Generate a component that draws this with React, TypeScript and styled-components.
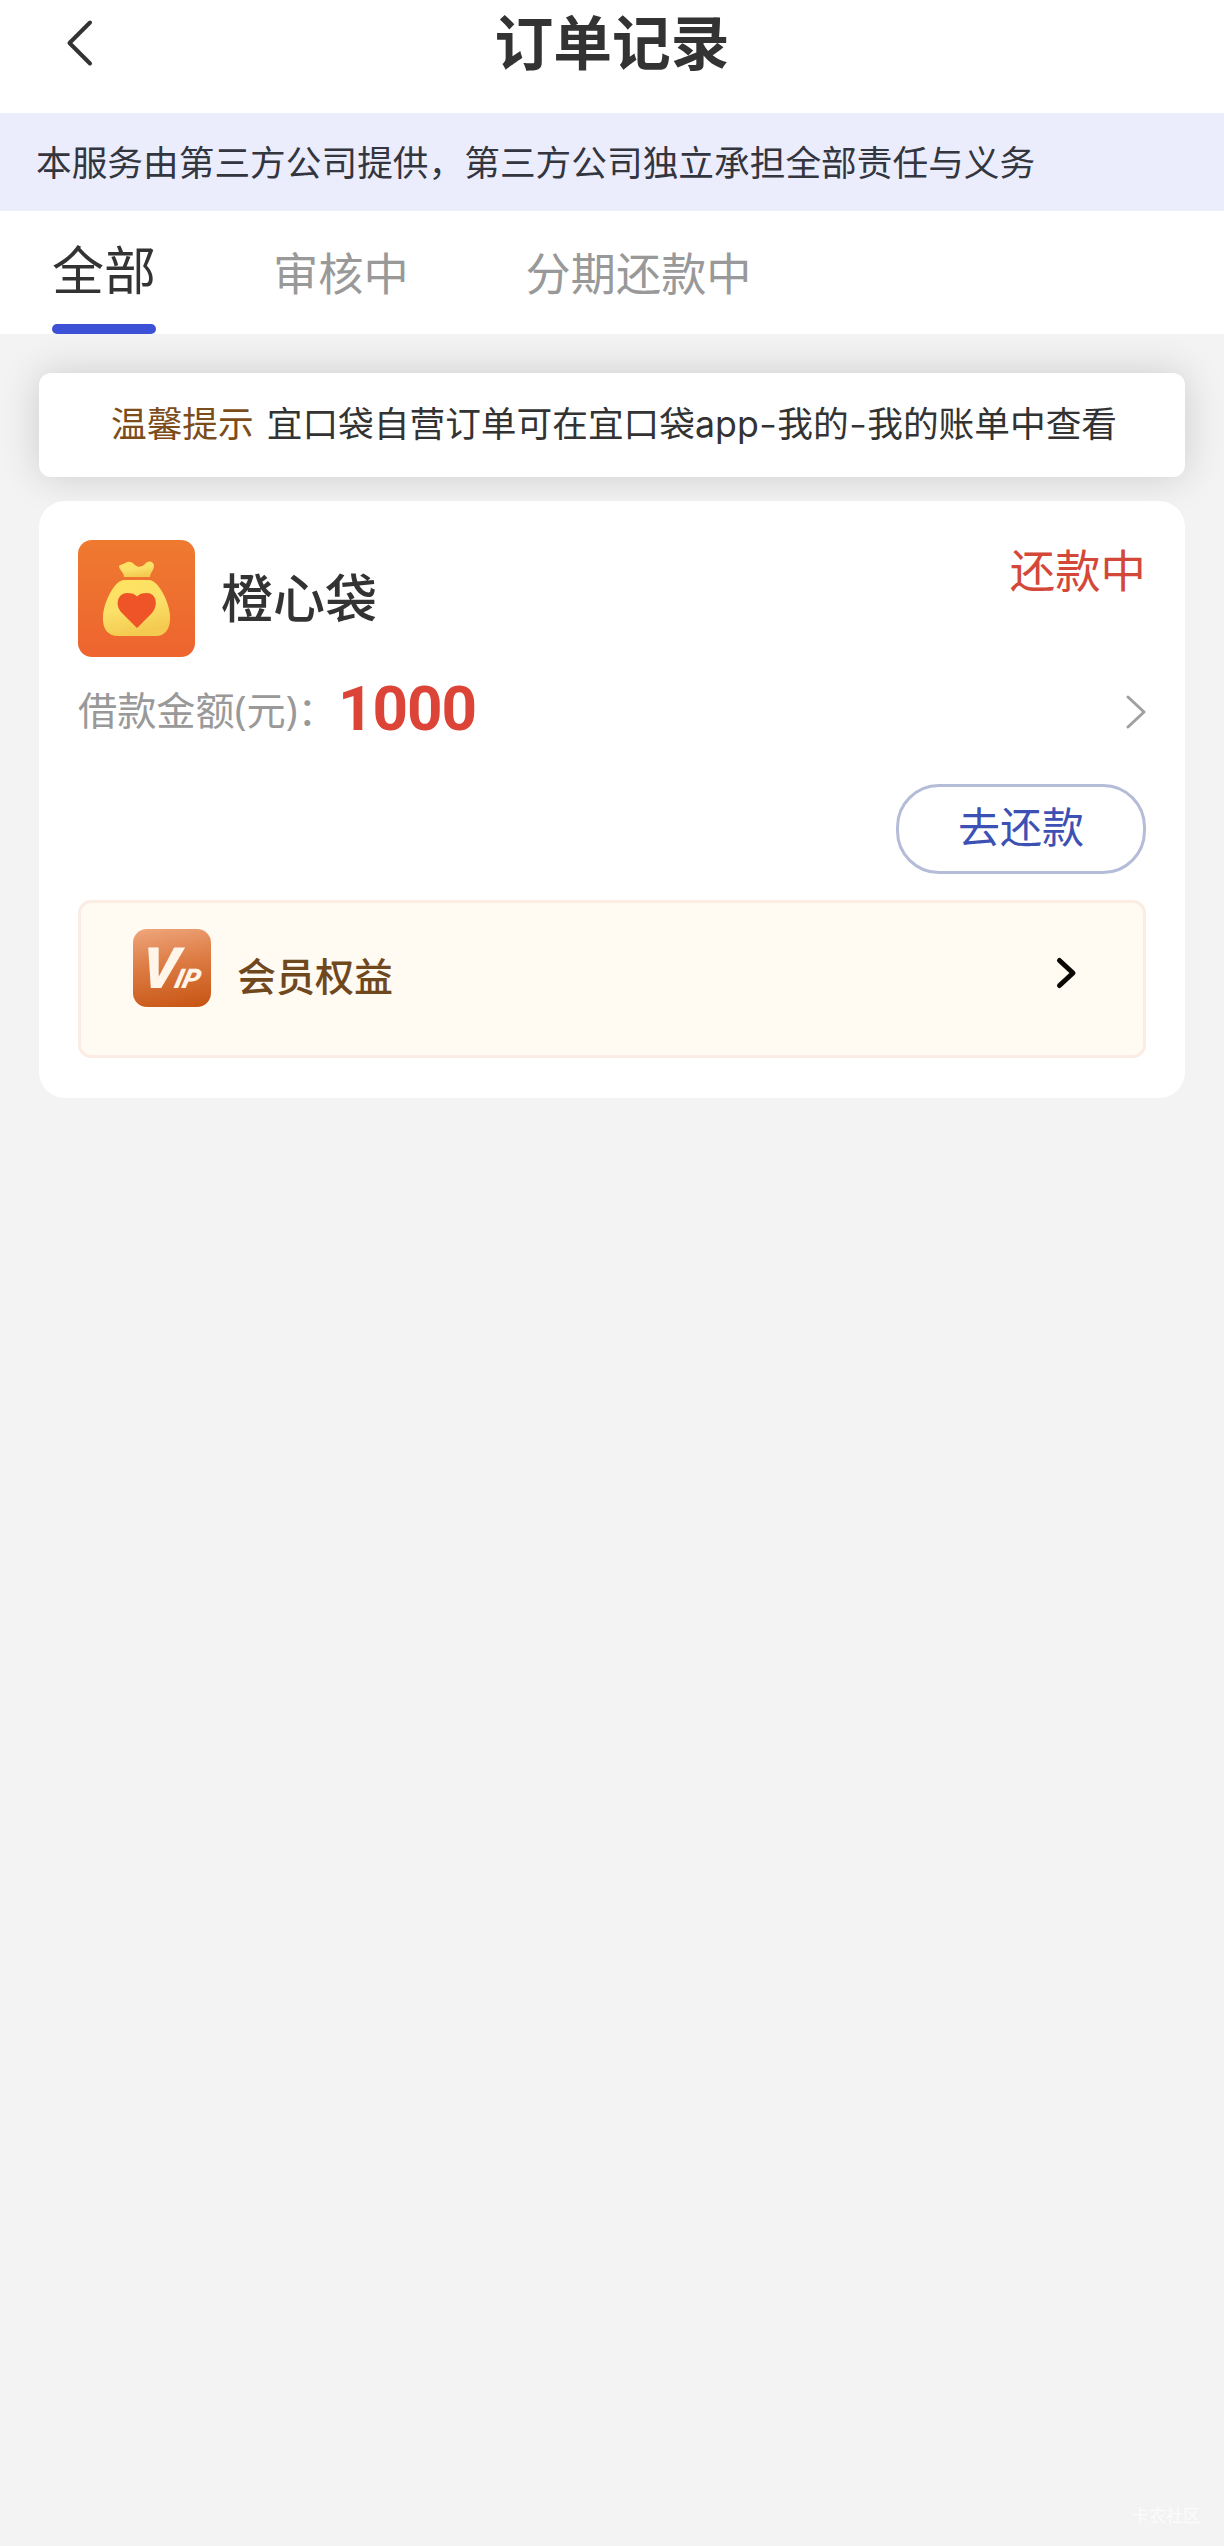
import React from "react";
import styled, { createGlobalStyle } from "styled-components";

const cjk = `"Noto Sans CJK SC", sans-serif`;
const mixed = `Inter, "Noto Sans CJK SC", sans-serif`;

const GlobalStyle = createGlobalStyle`
  * { box-sizing: border-box; }
  body { margin: 0; background: #f3f3f3; font-family: ${cjk}; color: #333; }
`;

const Page = styled.div`
  display: flex;
  flex-direction: column;
  width: 1224px;
  height: 2546px;
  background: #f3f3f3;
  overflow: hidden;
`;

const Header = styled.header`
  display: grid;
  grid-template-columns: 160px 1fr 160px;
  height: 113px;
  flex: none;
  background: #fff;
`;

const BackButton = styled.button`
  display: flex;
  align-items: flex-start;
  padding: 19px 0 0 65px;
  border: 0;
  background: none;
`;

const Title = styled.h1`
  margin: 0;
  text-align: center;
  font-family: Roboto, ${cjk};
  font-size: 58.8px;
  font-weight: 700;
  line-height: 90px;
`;

const Notice = styled.div`
  flex: none;
  height: 98px;
  padding-left: 36px;
  background: #ebedfc;
  color: #33353f;
  font-size: 35.7px;
  line-height: 95px;
  white-space: nowrap;
`;

const Tabs = styled.nav`
  display: flex;
  gap: 117px;
  flex: none;
  height: 123px;
  padding-left: 52px;
  background: #fff;
`;

const Tab = styled.div<{ $active?: boolean }>`
  display: flex;
  flex-direction: column;
  justify-content: space-between;
  height: 123px;
  white-space: nowrap;
  color: ${(p) => (p.$active ? "#333" : "#999")};
  font-size: ${(p) => (p.$active ? 52 : 45.2)}px;
  line-height: ${(p) => (p.$active ? 114 : 121)}px;
  &::after {
    content: "";
    display: ${(p) => (p.$active ? "block" : "none")};
    flex: none;
    height: 10px;
    margin-top: -1px;
    border-radius: 5px;
    background: #3c51d6;
  }
`;

const Content = styled.main`
  display: flex;
  flex-direction: column;
  gap: 24px;
  padding: 39px 39px 0;
`;

const Tip = styled.div`
  height: 104px;
  display: flex;
  gap: 13px;
  padding-left: 72px;
  border-radius: 12px;
  background: #fff;
  box-shadow: 0 0 40px rgba(0, 0, 0, 0.16);
  font-family: ${mixed};
  font-size: 35.7px;
  line-height: 102px;
  white-space: nowrap;
`;

const TipLabel = styled.span`
  color: #7d4c1b;
`;

const Dash = styled.span`
  font-size: 41px;
  font-weight: 300;
  line-height: 1;
  vertical-align: -1.5px;
`;

const Card = styled.section`
  display: flex;
  flex-direction: column;
  height: 597px;
  padding: 39px 39px 0;
  border-radius: 26px;
  background: #fff;
`;

const Product = styled.div`
  display: flex;
  height: 117px;
`;

const ProductName = styled.div`
  flex: 1;
  padding-left: 26px;
  font-size: 52px;
  font-weight: 500;
  line-height: 112px;
`;

const Status = styled.div`
  color: #d4483a;
  font-size: 45.4px;
  line-height: 56px;
`;

const AmountRow = styled.div`
  display: flex;
  align-items: center;
  height: 109px;
`;

const AmountLabel = styled.span`
  width: 260px;
  padding-bottom: 3px;
  color: #999;
  font-family: "Noto Sans", ${cjk};
  font-size: 39.2px;
  line-height: 100px;
  white-space: nowrap;
`;

const Amount = styled.strong`
  flex: 1;
  color: #dc4437;
  font-family: Roboto, sans-serif;
  font-size: 62px;
  font-weight: 700;
  line-height: 104px;
  letter-spacing: -1.1px;
  padding-bottom: 6px;
`;

const Actions = styled.div`
  display: flex;
  justify-content: flex-end;
  padding-top: 18px;
  height: 134px;
`;

const PayButton = styled.button`
  width: 250px;
  height: 90px;
  padding: 0 0 8px;
  border: 3px solid #b4bcd8;
  border-radius: 43px;
  background: #fff;
  color: #3d50b4;
  font-family: ${cjk};
  font-size: 42px;
  line-height: 76px;
`;

const Benefits = styled.div`
  display: flex;
  height: 158px;
  padding: 26px 65px 0 52px;
  border: 3px solid #fbede3;
  border-radius: 13px;
  background: #fffaf2;
`;

const BenefitsLabel = styled.span`
  flex: 1;
  padding-left: 26px;
  color: #70481e;
  font-size: 39px;
  font-weight: 500;
  line-height: 90px;
`;

const BenefitsArrow = styled.span`
  padding-top: 27px;
`;

const Watermark = styled.div`
  margin-top: auto;
  align-self: flex-end;
  padding: 0 24px 18px 0;
  color: #fcfcfc;
  font-size: 17px;
  line-height: 26px;
`;

const BackIcon = () => (
  <svg width="30" height="48" viewBox="0 0 30 48" fill="none">
    <path d="M25 3.5 4.5 24 25 44.5" stroke="#333" strokeWidth="4" strokeLinecap="round" strokeLinejoin="round" />
  </svg>
);

const MoreIcon = () => (
  <svg width="22" height="38" viewBox="0 0 22 38" fill="none">
    <path d="M4 4 20 19 4 34" stroke="#a0a0a0" strokeWidth="3" strokeLinecap="round" strokeLinejoin="round" />
  </svg>
);

const ArrowIcon = () => (
  <svg width="24" height="34" viewBox="0 0 24 34" fill="none">
    <path d="M5.5 4.5 19 17 5.5 29.5" stroke="#0a0805" strokeWidth="5" strokeLinecap="round" strokeLinejoin="round" />
  </svg>
);

const PouchIcon = () => (
  <svg width="117" height="117" viewBox="0 0 117 117">
    <defs>
      <linearGradient id="tile" x1="0" y1="0" x2="0" y2="1">
        <stop offset="0" stopColor="#ee7a2f" />
        <stop offset="1" stopColor="#ee642f" />
      </linearGradient>
      <linearGradient id="gold" x1="0" y1="0" x2="0.3" y2="1">
        <stop offset="0" stopColor="#ffe35e" />
        <stop offset="0.55" stopColor="#fbe069" />
        <stop offset="1" stopColor="#f4cb50" />
      </linearGradient>
    </defs>
    <rect width="117" height="117" rx="14" fill="url(#tile)" />
    <path
      d="M41 27 C41 24 45 25 48 22.500 C51 21 54 22 57 25 C60 28 64 27 67 24 C70 20 76 21 76 26 C76 30 72 33 72 37 H46 C46 33 42 30 41 27Z"
      fill="url(#gold)"
    />
    <path
      d="M46 40 H71 C80 40 91 61 92 75 C93 89 87 96 78 96 H40 C30 96 24 89 25 76 C26 61 37 40 46 40Z"
      fill="url(#gold)"
    />
    <path
      d="M59 88 L44 73 C36 65 40 53 49 53 C54 53 57 54 59 56.500 C61 54 64 53 69 53 C78 53 81 65 74 73Z"
      fill="#ee5427"
    />
  </svg>
);

const VipTile = styled.div`
  display: flex;
  width: 78px;
  height: 78px;
  padding: 9px 0 0 9px;
  border-radius: 14px;
  background: linear-gradient(170deg, #efa67c 0%, #dc7b43 45%, #c75413 100%);
  color: #fff5e8;
  font-family: Roboto, sans-serif;
  font-style: italic;
  font-weight: 900;
`;

const VipLarge = styled.span`
  width: 35px;
  font-size: 57px;
  line-height: 62px;
  transform: skewX(-6deg);
`;

const VipSmall = styled.span`
  font-size: 27px;
  line-height: 83px;
  transform: skewX(-14deg);
`;

export default function App() {
  return (
    <>
      <GlobalStyle />
      <Page>
        <Header>
          <BackButton aria-label="返回">
            <BackIcon />
          </BackButton>
          <Title>订单记录</Title>
        </Header>
        <Notice>本服务由第三方公司提供，第三方公司独立承担全部责任与义务</Notice>
        <Tabs>
          <Tab $active>全部</Tab>
          <Tab>审核中</Tab>
          <Tab>分期还款中</Tab>
        </Tabs>
        <Content>
          <Tip>
            <TipLabel>温馨提示</TipLabel>
            <span>
              宜口袋自营订单可在宜口袋app<Dash>-</Dash>我的<Dash>-</Dash>我的账单中查看
            </span>
          </Tip>
          <Card>
            <Product>
              <PouchIcon />
              <ProductName>橙心袋</ProductName>
              <Status>还款中</Status>
            </Product>
            <AmountRow>
              <AmountLabel>借款金额(元)：</AmountLabel>
              <Amount>1000</Amount>
              <MoreIcon />
            </AmountRow>
            <Actions>
              <PayButton>去还款</PayButton>
            </Actions>
            <Benefits>
              <VipTile>
                <VipLarge>V</VipLarge>
                <VipSmall>IP</VipSmall>
              </VipTile>
              <BenefitsLabel>会员权益</BenefitsLabel>
              <BenefitsArrow>
                <ArrowIcon />
              </BenefitsArrow>
            </Benefits>
          </Card>
        </Content>
        <Watermark>卡农社区</Watermark>
      </Page>
    </>
  );
}
